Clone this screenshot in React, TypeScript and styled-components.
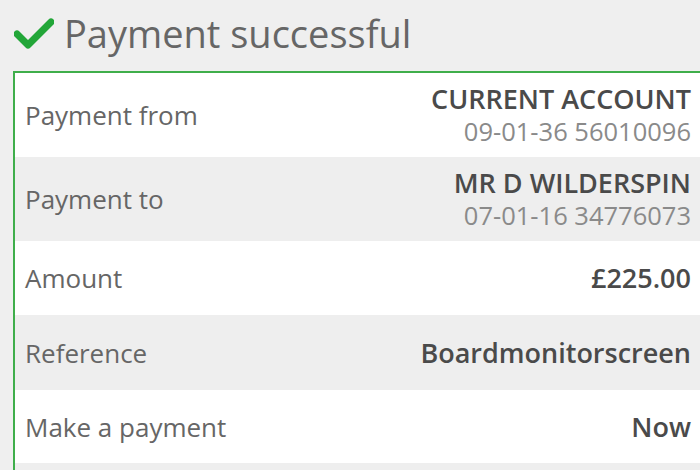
import React from "react";
import styled, { createGlobalStyle } from "styled-components";

const Global = createGlobalStyle`
  html, body {
    margin: 0;
    padding: 0;
    background: #efefef;
    overflow: hidden;
  }
  body {
    font-family: "Open Sans", "Noto Sans", sans-serif;
    width: 700px;
    height: 470px;
  }
`;

const Page = styled.div`
  display: flex;
  flex-direction: column;
  padding: 0 0 0 13px;
  width: 700px;
  box-sizing: border-box;
`;

const Header = styled.div`
  display: flex;
  align-items: center;
  gap: 10px;
  height: 71px;
  padding: 0 0 6px 1px;
  box-sizing: border-box;
`;

const Title = styled.h1`
  margin: 0;
  font-size: 38px;
  font-weight: 400;
  color: #666666;
  line-height: 1;
`;

const Card = styled.div`
  border: 2px solid #3fae4b;
  border-bottom: none;
  margin-right: -14px;
  display: flex;
  flex-direction: column;
`;

const Row = styled.div<{ $shade: boolean; $h: number }>`
  display: flex;
  align-items: center;
  justify-content: space-between;
  height: ${(p) => p.$h}px;
  padding: 0 21px 0 10px;
  background: ${(p) => (p.$shade ? "#eeeeee" : "#ffffff")};
`;

const Label = styled.span`
  font-size: 26px;
  color: #666666;
  line-height: 1;
`;

const Value = styled.div`
  display: flex;
  flex-direction: column;
  align-items: flex-end;
  gap: 2px;
`;

const Strong = styled.span`
  font-size: 27px;
  font-weight: 600;
  color: #4a4a4a;
  line-height: 30px;
`;

const Sub = styled.span`
  font-size: 25.5px;
  color: #8a8a8a;
  line-height: 30px;
`;

const Check = () => (
  <svg width="40" height="32" viewBox="0 0 40 32">
    <path
      d="M3 17 L14 28 L37 5"
      fill="none"
      stroke="#22a638"
      strokeWidth="7"
      strokeLinecap="round"
      strokeLinejoin="round"
    />
  </svg>
);

type Item = { label: string; main: string; sub?: string; h: number };

const items: Item[] = [
  { label: "Payment from", main: "CURRENT ACCOUNT", sub: "09-01-36 56010096", h: 84 },
  { label: "Payment to", main: "MR D WILDERSPIN", sub: "07-01-16 34776073", h: 84 },
  { label: "Amount", main: "£225.00", h: 74 },
  { label: "Reference", main: "Boardmonitorscreen", h: 75 },
  { label: "Make a payment", main: "Now", h: 73 },
  { label: "", main: "", h: 7 },
];

export default function App() {
  return (
    <>
      <Global />
      <Page>
        <Header>
          <Check />
          <Title>Payment successful</Title>
        </Header>
        <Card>
          {items.map((it, i) => (
            <Row key={i} $shade={i % 2 === 1} $h={it.h}>
              <Label>{it.label}</Label>
              <Value>
                {it.main && <Strong>{it.main}</Strong>}
                {it.sub && <Sub>{it.sub}</Sub>}
              </Value>
            </Row>
          ))}
        </Card>
      </Page>
    </>
  );
}
